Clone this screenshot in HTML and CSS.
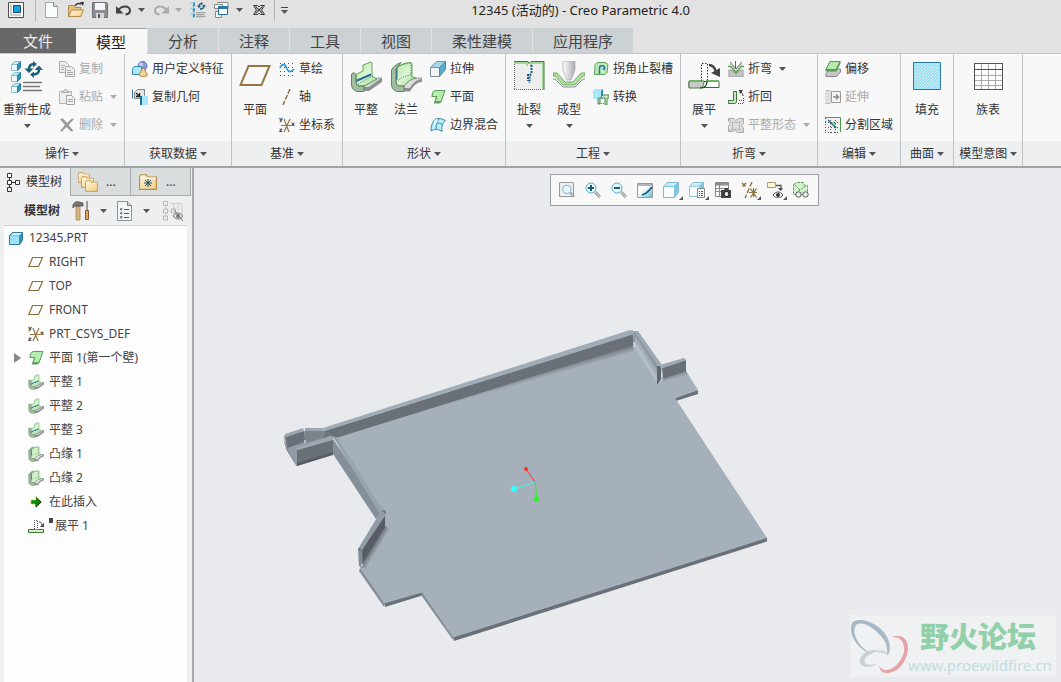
FILE: index.html
```html
<!DOCTYPE html>
<html lang="zh-CN">
<head>
<meta charset="utf-8">
<meta name="viewport" content="width=device-width, initial-scale=1">
<title>12345 (活动的) - Creo Parametric 4.0</title>
<link rel="stylesheet" href="styles.css">
</head>
<body>
<svg class="sprite" aria-hidden="true">
  <defs>
    <linearGradient id="g-green" x1="0" y1="0" x2="1" y2="1"><stop offset="0" stop-color="#b5e6a8"/><stop offset=".5" stop-color="#dcf5d4"/><stop offset="1" stop-color="#9bd592"/></linearGradient>
    <linearGradient id="g-folder" x1="0" y1="0" x2="1" y2="1"><stop offset="0" stop-color="#fff6dc"/><stop offset="1" stop-color="#f2cc83"/></linearGradient>
    <linearGradient id="g-grey" x1="0" y1="0" x2="1" y2="0"><stop offset="0" stop-color="#fff"/><stop offset="1" stop-color="#a9abb0"/></linearGradient>
    <linearGradient id="g-screen" x1="0" y1="0" x2="1" y2="1"><stop offset=".4" stop-color="#fff"/><stop offset="1" stop-color="#5fb4d6"/></linearGradient>
    <pattern id="p-hatch" width="3" height="3" patternUnits="userSpaceOnUse"><rect width="3" height="3" fill="#8edcf8"/><path d="M-1 1L1-1M0 3L3 0M2 4L4 2" stroke="#fff" stroke-width=".9"/></pattern>
  </defs>
  <symbol id="caret" viewBox="0 0 7 4"><path d="M0 0h7L3.500 4z" fill="currentColor"/></symbol>
  <symbol id="app" viewBox="0 0 16 16"><path d="M.5.5h15v15H.5z" fill="#fff" stroke="#4a4a4a"/><path d="M2 2h2v12H2zM4 12h9v2H4z" fill="#c9ced2"/><path d="M5.500 3.500h7v7h-7z" fill="#17a3dc" stroke="#1b4b6d"/></symbol>
  <symbol id="new" viewBox="0 0 16 16"><path d="M1.500.5h8l4 4v11h-12z" fill="#fbfcfc" stroke="#a3a8ab"/><path d="M9.500.5v4h4" fill="#dfe3e6" stroke="#8f9396"/></symbol>
  <symbol id="open" viewBox="0 0 16 16"><path d="M.5 14.500v-11h5l1.500 2h6v9z" fill="#e9c27d" stroke="#b08a4c"/><path d="M.5 14.500l3-6.500h12l-3 6.500z" fill="url(#g-folder)" stroke="#b08a4c"/><path d="M7 4c1-2 3-3 6-2" fill="none" stroke="#333" stroke-width="1.500"/><path d="M12 0l4 0-1 4z" fill="#333"/></symbol>
  <symbol id="save" viewBox="0 0 16 16"><path d="M.5.5h14l1 1v14H.5z" fill="#8b8e92" stroke="#6d7074"/><path d="M3 1h10v7H3z" fill="#f4f5f6"/><path d="M4 11h8v5H4z" fill="#d7d9db"/><path d="M6 12h2v4H6z" fill="#555"/></symbol>
  <symbol id="undo" viewBox="0 0 16 16"><path d="M2.500 8C6 3 13 3.500 14 8c.3 2.500-1.500 4-4.500 4.500" fill="none" stroke="#434343" stroke-width="2"/><path d="M0 4v7.500h7.500z" fill="#434343"/></symbol>
  <symbol id="redo" viewBox="0 0 16 16"><path d="M13.500 8C10 3 3 3.500 2 8c-.3 2.500 1.500 4 4.500 4.500" fill="none" stroke="#aaa" stroke-width="2"/><path d="M16 4v7.500H8.500z" fill="#aaa"/></symbol>
  <symbol id="minicube" viewBox="0 0 10 10"><path d="M.5 3.500h6v6h-6z" fill="#effbff" stroke="#8bbdd2"/><path d="M.5 3.500l3-3h6l-3 3z" fill="#bdeafa" stroke="#8bbdd2"/><path d="M6.500 3.500l3-3v6l-3 3z" fill="#2d93b8" stroke="#2582a5"/></symbol>
  <symbol id="regen" viewBox="0 0 32 32"><use href="#minicube" x="0" y="0" width="10" height="10"/><use href="#minicube" x="0" y="11" width="10" height="10"/><use href="#minicube" x="0" y="22" width="10" height="10"/><path d="M12 21.500h19M12 25.500h17M12 29.500h19" stroke="#777" stroke-width="1.500"/><path d="M23 3c-3 0-5 2-5 5.500M22 13.500c4 0 6-2 6-5" fill="none" stroke="#1b5e7b" stroke-width="2.500"/><path d="M13.500 7.500h9L18 12zM23.500 9h8.500L28 4.500zM22 0l4 3-4 3.500zM23 10.500v6.500l-4-3.500z" fill="#1b5e7b"/></symbol>
  <symbol id="windows" viewBox="0 0 16 16"><path d="M.5 2.500h8v4h-8zM3 .5h11v6h-4M1.500 9.500h6v6h-6z" fill="#f8f8f8" stroke="#858585"/><path d="M4.500 4.500h9v8h-9z" fill="#fff" stroke="#226e91"/><path d="M4 4h10v3H4z" fill="#247aa0"/></symbol>
  <symbol id="closewin" viewBox="0 0 16 16"><path d="M2.500 3.500h4L8 5l1.500-1.500h4L10.500 8l3 4.500h-4L8 11l-1.500 1.500h-4L5.500 8z" fill="#fff" stroke="#333"/><path d="M4.500 4.500l7 7M11.500 4.500l-7 7" stroke="#444" stroke-width="1.200"/></symbol>
  <symbol id="copy" viewBox="0 0 16 16"><g fill="#eee" stroke="#aaa"><path d="M.5.5h6l3 3v8h-9z"/><path d="M6.500 5.500h6l3 3v7h-9z"/></g><path d="M2 4.500h4M2 6.500h3M2 8.500h3M8 9.500h4M8 11.500h6M8 13.500h6" stroke="#aaa"/></symbol>
  <symbol id="paste" viewBox="0 0 16 16"><path d="M.5 2.500h12v12H.5z" fill="#eee" stroke="#b3b3b3"/><path d="M3 3.500C4 3 4 .5 6.500.5S9 3 10 3.500z" fill="#ddd" stroke="#aaa"/><path d="M7.500 6.500h5l3 3v6h-8z" fill="#f6f6f6" stroke="#a0a0a0"/><path d="M9 10.500h5M9 12.500h5" stroke="#a0a0a0"/></symbol>
  <symbol id="delete" viewBox="0 0 16 16"><path d="M1 2l3-.5L8 6l5-4.500 2 .5-5.500 6 5 6-2.500.5L7.500 10 3 14.500l-2-.5 5-6z" fill="#999"/></symbol>
  <symbol id="udf" viewBox="0 0 16 16"><circle cx="10.500" cy="5" r="4.500" fill="#8c9bd4" stroke="#6576b3"/><circle cx="9" cy="3.500" r="2" fill="#c6cff3"/><path d="M.5 7.500l2-2h7v7l-2 1h-7z" fill="#b1e7fa" stroke="#368ba8"/><path d="M11 6l4.500 8c-1 2-7 2-8.500 0z" fill="#f3d39a" stroke="#ad8448"/></symbol>
  <symbol id="copygeom" viewBox="0 0 16 16"><path d="M.5.5v9" stroke="#356fa2"/><path d="M2.500 3.500l3-3h7v6l-2 3h-8z" fill="#e4e4e4" stroke="#858585"/><path d="M4 4l3 3M7.500 4v3.500H4" stroke="#222" fill="none" stroke-width="1.400"/><path d="M8 7h8v9H8z" fill="#a9e6fc"/><path d="M8 7h2v9H8z" fill="#196d8f"/></symbol>
  <symbol id="plane" viewBox="0 0 32 32"><path d="M9.500 5h21L22.500 24H1.500z" fill="none" stroke="#957744" stroke-width="2"/></symbol>
  <symbol id="plane-s" viewBox="0 0 16 16"><path d="M4.500 3.500h10l-4 9H.8z" fill="none" stroke="#8b6f3f" stroke-width="1.200"/></symbol>
  <symbol id="sketch" viewBox="0 0 16 16"><path d="M1 2.500h15M1 6.500h15M1 10.500h15M1 14.500h15" stroke="#555" stroke-dasharray="1 3"/><path d="M1 7c2-5 5-4 6.500 0s4 5 7.500 1" fill="none" stroke="#2e9ed0" stroke-width="1.800"/></symbol>
  <symbol id="axis" viewBox="0 0 16 16"><path d="M11 0L4 16" stroke="#8b6f3f" stroke-width="1.500" stroke-dasharray="5 1.500"/></symbol>
  <symbol id="flat" viewBox="0 0 32 32"><path d="M14 25l14-8h4v4L19 30h-5z" fill="#8d8f92"/><path d="M14 25l14-8h4l-13 9.500h-5z" fill="#d2d3d5" stroke="#85888b" stroke-width=".8"/><path d="M6 13.500L13 10V4l8-3 1 1v13l5 3-13 7H9q-3-1-3-4z" fill="url(#g-green)" stroke="#5fa45f"/><path d="M8 23l15-8" stroke="#4a8f4e" stroke-dasharray="1 1"/><path d="M6 20l15-6.500" stroke="#1d6f95" stroke-width="2"/><path d="M1.500 13L4 11.500l2 2V21q0 4 3 4h5v5.500H7Q1.500 29 1.500 23z" fill="#a3bda0" stroke="#5c8260"/></symbol>
  <symbol id="flange" viewBox="0 0 32 32"><path d="M14 25q5-8 12-8h6v4q-7 0-12 9.500h-6z" fill="#8d8f92"/><path d="M14 25q5-8 12-8h6v1.500q-7 0-12 9h-6z" fill="#dcdddf" stroke="#85888b" stroke-width=".8"/><path d="M6 8Q10 2 21 1.500l1 1V16l4 1q-7 1-12 8H9q-3-1-3-4z" fill="url(#g-green)" stroke="#5fa45f"/><path d="M8 6Q13 2.500 21 2.500V14Q13 15 8 20" fill="none" stroke="#21693b" stroke-dasharray="1 1.500"/><path d="M6.500 7v12" stroke="#1679ac" stroke-width="2"/><path d="M1.500 9Q4 4 11 1.500L6 8v13q0 4 3 4h5v5.500H7Q1.500 29 1.500 23z" fill="#a3bda0" stroke="#5c8260"/></symbol>
  <symbol id="extrude" viewBox="0 0 16 16"><path d="M.5 6.500h9v9h-9z" fill="#f3f7f9" stroke="#7f8c93"/><path d="M.5 6.500l6-6h9l-6 6z" fill="#a4d6ec" stroke="#5b9fbc"/><path d="M9.500 6.500l6-6v8l-6 7z" fill="#5dabcb" stroke="#3f8eaf"/></symbol>
  <symbol id="wall" viewBox="0 0 16 16"><path d="M2.500 4.500L5 1.500h10L11 13.500l-2 1H3.500l2-4v-3h-4z" fill="#5c9e5f"/><path d="M2.500 3.500L5 1.500h10L11 12.500H5l2-5H2z" fill="#b6ecac" stroke="#5c9e5b"/></symbol>
  <symbol id="blend" viewBox="0 0 16 16"><path d="M1 14C1 8 3 4 5.500 2c3-1 6-.5 10 1.500-3 2-4 5-3.500 11-2-2-7-3-11-.5z" fill="#bcecfa" stroke="#378bab"/><path d="M3 7c4-2 7-1 10 1M9 2C6 5 6 9 6.500 13" fill="none" stroke="#378bab"/><path d="M5 3l3-1-2 5-3 1z" fill="#fff"/></symbol>
  <symbol id="rip" viewBox="0 0 32 32"><path d="M2 3h27v26H2z" fill="#eee"/><path d="M1.500 3v26M1 28.500h27" stroke="#666" stroke-dasharray="1 1"/><path d="M1 2h13v3M18 5V2h12v27" stroke="#a4d998" stroke-width="2" fill="none"/><path d="M1 .5h14l1 2 2-2h13V29" fill="none" stroke="#41733f"/><path d="M18.500 4v8l-2 3v7M15 13v7" fill="none" stroke="#155e84" stroke-width="2" stroke-dasharray="2 1"/></symbol>
  <symbol id="form" viewBox="0 0 32 32"><path d="M10 0h12v9l-4 10h-4L10 9z" fill="url(#g-grey)" stroke="#a4a6aa" stroke-width=".7"/><path d="M0 12h4l8 9h8l8-9h4v3h-2l-8 9H10L2 15H0z" fill="#b0df9d" stroke="#5f9a5a" stroke-width=".8"/><path d="M0 18h2l8 8h12l8-8h2" fill="none" stroke="#898b8c"/></symbol>
  <symbol id="relief" viewBox="0 0 16 16"><path d="M2 3.500l2-2h8l3 2-1 8-2 2H1.500z" fill="#bde6b5" stroke="#5fa35e"/><path d="M6.500 13V7c0-3 5-3 5 0v1h-3" fill="none" stroke="#217aa0" stroke-width="1.500"/><path d="M9 6v7" stroke="#e5ffff"/></symbol>
  <symbol id="convert" viewBox="0 0 16 16"><path d="M0 2l2-2h8v10H0z" fill="#aae7fb"/><path d="M8 2l2-2v8l-2 2z" fill="#2d8db3"/><path d="M7 9l3-3h6v3h-2v7h-2V9zM5 9h2v6H5z" fill="#cfe3cb" stroke="#4c8d4f"/><path d="M6 14.500h5" stroke="#4c8d4f" stroke-dasharray="1 1"/></symbol>
  <symbol id="unfold" viewBox="0 0 32 32"><path d="M13.500 20V2.500h6V20" fill="#fff" stroke="#333" stroke-dasharray="1.500 1.500"/><path d="M1 20.500h30v6H1z" fill="#fff" stroke="#376b35"/><path d="M1 20h15c0 5-2 7-5 7H1z" fill="#c9c9c9" stroke="#477d43"/><path d="M1 20h12M18 20h13" stroke="#6eb362" stroke-width="2"/><path d="M12 27c6 0 7-3 7-7" fill="none" stroke="#275e28" stroke-width="1.500"/><path d="M21 4c4 0 6 3 7 7" fill="none" stroke="#444" stroke-width="2.500"/><path d="M32 7v9l-9-4z" fill="#444"/></symbol>
  <symbol id="unfold-s" viewBox="0 0 16 16"><path d="M6.500 11V2.500h3V11" fill="#fff" stroke="#444" stroke-dasharray="1 1"/><path d="M.5 11.500h6c2 0 1 0 3 0h6v3H.5z" fill="#d3ecc9" stroke="#3c7a3a"/><path d="M11 4c2 0 3 1 3 3" fill="none" stroke="#444"/><path d="M16 5v4h-4z" fill="#444"/></symbol>
  <symbol id="bend" viewBox="0 0 16 16"><path d="M1 9h3l4 4 4-4h3v7H1z" fill="#c4c4c4" stroke="#999"/><path d="M0 5.500h3l5 6 5-6h3" fill="none" stroke="#5e9b58" stroke-width="1.500"/><path d="M2 1l6 7 6-7M7.500 0v8" fill="none" stroke="#666"/><path d="M2 3l6 7 6-7" fill="none" stroke="#9bd88c"/></symbol>
  <symbol id="bendback" viewBox="0 0 16 16"><path d="M.5 11.500h5v-9h3v10q0 2-2 2h-6z" fill="#c9e6c2" stroke="#3d7a3a"/><path d="M10 14.500h6M11 11.500h5M15.500 9v5" stroke="#555" stroke-dasharray="1 1"/><path d="M15 7c0-2-1-3-2-4" fill="none" stroke="#333"/><path d="M11 1h4l-3 4z" fill="#333"/></symbol>
  <symbol id="flatstate" viewBox="0 0 16 16"><path d="M.5 1.500h5l2 2 3-2h5v5l-2 2 2 2v5h-6l-2-2-3 1h-4v-6l2-2-2-2z" fill="#ddd" stroke="#aaa"/><path d="M4.500 5.500h7v7h-7zM1 2l4 4M11 6l4-4M11 12l4 4M5 12l-4 2" fill="none" stroke="#999" stroke-dasharray="1 1"/></symbol>
  <symbol id="offset" viewBox="0 0 16 16"><path d="M1 12.500L5 8h10.500v3l-4 4.500H1z" fill="#c7c7c7" stroke="#888"/><path d="M.5 8.500l4-8h11v2l-4 8H.5z" fill="#5c9e5f"/><path d="M1 8.500l4-8h10l-4 8z" fill="#b6ecac" stroke="#5b995b"/></symbol>
  <symbol id="extend" viewBox="0 0 16 16"><path d="M0 2h6v12H0z" fill="#ddd"/><path d="M.5 1.500h5M.5 14.500h5" stroke="#bbb"/><path d="M6.500 2.500h9v11h-9z" fill="#f4f4f4" stroke="#999"/><path d="M8 8h5M11 5.500L13.500 8 11 10.500" stroke="#888" stroke-width="1.500" fill="none"/></symbol>
  <symbol id="split" viewBox="0 0 16 16"><path d="M0 1h15v14H0z" fill="#f2f2f2"/><path d="M5 5h6v6z" fill="#9adf91"/><path d="M.5 1v15M0 15.500h15M0 10.500h15M0 5.500h15M5.500 0v16M10.500 0v16" stroke="#555" stroke-dasharray="1 2"/><path d="M0 .5h15.500V15" stroke="#4f984b" fill="none"/><path d="M3 3l8 8" stroke="#1c7190" stroke-width="1.200"/></symbol>
  <symbol id="fill" viewBox="0 0 32 32"><path d="M2.500 1.500h27v27h-27z" fill="#a6e6fc" stroke="#2a7899"/><path d="M5 4h22v22H5z" fill="url(#p-hatch)"/></symbol>
  <symbol id="family" viewBox="0 0 32 32"><path d="M2.500 2.500h28v26h-28z" fill="#fff" stroke="#555"/><path d="M3 14.500h27M3 19.500h27M3 24.500h27M9.500 3v25M16.500 3v25M23.500 3v25" stroke="#aaa"/><path d="M2 8.500h29M2 2.500h29" stroke="#555"/></symbol>
  <symbol id="treeicon" viewBox="0 0 16 20"><path d="M4.500 3v14M4 10.500h6" stroke="#333"/><path d="M2.500 1.500h4v4h-4zM2.500 8.500h4v4h-4zM2.500 15.500h4v4h-4zM10.500 8.500h4v4h-4z" fill="#fff" stroke="#333"/></symbol>
  <symbol id="onefolder" viewBox="0 0 16 14"><path d="M.5 13.500V2.500l1-2h5l1 2h8v11z" fill="url(#g-folder)" stroke="#b58b47"/><path d="M1 3.500h14" stroke="#fff8df"/></symbol>
  <symbol id="folders" viewBox="0 0 20 20"><use href="#onefolder" x="0" y="0" width="12" height="11"/><use href="#onefolder" x="3" y="4" width="13" height="12"/><use href="#onefolder" x="7" y="8" width="13" height="12"/></symbol>
  <symbol id="favorite" viewBox="0 0 20 20"><use href="#onefolder" x="1" y="2" width="18" height="16"/><path d="M10 7v8M6 11h8M7 8l6 6M13 8l-6 6" stroke="#164f68"/></symbol>
  <symbol id="tools" viewBox="0 0 20 20"><path d="M4 5h4v14H4z" fill="#d8b47d" stroke="#a5844f" stroke-width=".8"/><path d="M1 4c1-3 4-4 6-3l4 1v3H8.500V5H4C2 5 2 5 1 7z" fill="#777" stroke="#444" stroke-width=".8"/><path d="M14 0h2v9h-2z" fill="#999"/><path d="M13.500 9.500h3v9h-3z" fill="#dba460" stroke="#805e32"/></symbol>
  <symbol id="list" viewBox="0 0 20 20"><path d="M2.500.5h10l4 4v15h-14z" fill="#f1f6f8" stroke="#8a9398"/><path d="M12.500.5v4h4" fill="#ccd4d8" stroke="#7a8388"/><path d="M9 8.500h5M9 12.500h5M9 16.500h5" stroke="#555"/><path d="M5.500 7.500h1.500v1.500h-1.500zM5.500 11.500h1.500v1.500h-1.500zM5.500 15.500h1.500v1.500h-1.500z" fill="none" stroke="#555" stroke-width=".7"/></symbol>
  <symbol id="hide" viewBox="0 0 20 20"><path d="M3 3v14M3 10h7M7 2.500h12v12M11 3v5M15 3v8" stroke="#ccc" fill="none"/><path d="M.5.500h4v4h-4zM.5 8h4v4h-4zM.5 15h4v4h-4zM8.500 8h4v4h-4z" fill="#eee" stroke="#b8b8b8"/><path d="M10 15c3-4 7-4 10 0-3 4-7 4-10 0z" fill="#ddd" stroke="#777"/><circle cx="15" cy="15" r="2" fill="#777"/><path d="M11 9l9 11" stroke="#777"/></symbol>
  <symbol id="cube" viewBox="0 0 16 16"><path d="M1.500 5.500l3-3h10v8l-3 4h-10z" fill="#2f92ba" stroke="#2a789b"/><path d="M2 6h9v8H2z" fill="#9be3fa"/><path d="M2 5.500L5 3h9l-3 2.500z" fill="#d2f4ff"/></symbol>
  <symbol id="insert" viewBox="0 0 16 16"><path d="M3 6h5V2.500L13.500 8 8 13.500V10H3z" fill="#078c07" stroke="#b6d52c" stroke-width=".7"/><path d="M8 9v4l5-5-5-4" fill="none" stroke="#163f05"/></symbol>
  <symbol id="lens" viewBox="0 0 16 16"><path d="M10 10l5 5" stroke="#999" stroke-width="3"/><path d="M10 10l5 5" stroke="#ddd"/><circle cx="6" cy="6" r="5" fill="#e8f8ff" stroke="#5ba9c6"/></symbol>
  <symbol id="zoomfit" viewBox="0 0 16 16"><path d="M.5.5h14v14H.5z" fill="#eee" stroke="#999"/><use href="#lens" x="3" y="2" width="13" height="14"/></symbol>
  <symbol id="zoomin" viewBox="0 0 16 16"><use href="#lens" width="16" height="16"/><path d="M3 6h6M6 3v6" stroke="#185b75" stroke-width="2"/></symbol>
  <symbol id="zoomout" viewBox="0 0 16 16"><use href="#lens" width="16" height="16"/><path d="M3 6h6" stroke="#185b75" stroke-width="2"/></symbol>
  <symbol id="repaint" viewBox="0 0 16 16"><path d="M.5 1.500h15v14H.5z" fill="url(#g-screen)" stroke="#999"/><path d="M1 2h14v2H1z" fill="#a9b9c2"/><path d="M5 13C9 12 12 9 15 5" fill="none" stroke="#145f7e" stroke-width="1.800"/></symbol>
  <symbol id="shade" viewBox="0 0 16 16"><path d="M.5 4.500l4-4h11v10l-4 5H.5z" fill="#7cc6e2" stroke="#7fbdd5"/><path d="M1 5h10v10H1z" fill="#f8fdff"/><path d="M1 4l4-3h9l-3 3z" fill="#c6eefb"/></symbol>
  <symbol id="views" viewBox="0 0 16 16"><use href="#shade" width="15" height="15"/><path d="M8.500 6.500h7v9h-7z" fill="#fff" stroke="#888"/><path d="M10 9.500h1m1 0h2M10 11.500h1m1 0h2M10 13.500h1m1 0h2" stroke="#555"/></symbol>
  <symbol id="camera" viewBox="0 0 16 16"><path d="M.5.5h13v14H.5z" fill="#f8f8f8" stroke="#888"/><path d="M1 1h12v2H1zM1 6.500h12M1 9.500h12M4.500 1v14" stroke="#888" fill="#999"/><path d="M6 8h3l1-2h3l1 2h2v8H6z" fill="#444"/><circle cx="11.500" cy="12" r="2.500" fill="#eee" stroke="#111"/></symbol>
  <symbol id="datum" viewBox="0 0 16 16"><path d="M1 1l4 4M5 1L1 5M11 0L4 16" stroke="#8b6f3f" stroke-width="1.400" stroke-dasharray="5 2"/><path d="M12.500 6v9M8 10.500h8M9.500 6.500l6 9M15.500 6.500l-6 9" stroke="#8b6f3f" stroke-width="1.200"/></symbol>
  <symbol id="annot" viewBox="0 0 16 16"><path d="M.5.5h8v5h-8z" fill="#fff3d6" stroke="#b09a6f"/><path d="M9 3.500h5v4" fill="none" stroke="#555" stroke-width="1.300"/><path d="M11 6h5l-2.500 3z" fill="#444"/><path d="M6 13c3-4 7-4 10 0-3 4-7 4-10 0z" fill="#fff" stroke="#444"/><circle cx="11" cy="13" r="2" fill="#333"/></symbol>
  <symbol id="bendview" viewBox="0 0 16 16"><path d="M.5 2.500l3-2h7l1 3h3v9H.5z" fill="#d2f0cc" stroke="#58a855" stroke-dasharray="3 1"/><path d="M2 3l5 5 6-4M7 8l-5 5" fill="none" stroke="#347b34" stroke-dasharray="1 1"/><circle cx="5.500" cy="12.500" r="2.700" fill="#eee" stroke="#555"/><circle cx="12.500" cy="12.500" r="2.700" fill="#eee" stroke="#555"/></symbol>
</svg>

<header class="titlebar">
  <div class="quick">
    <button class="tool" aria-label="窗口"><svg class="icon"><use href="#app"/></svg></button>
    <span class="rule"></span>
    <button class="tool" aria-label="新建"><svg class="icon"><use href="#new"/></svg></button>
    <button class="tool" aria-label="打开"><svg class="icon"><use href="#open"/></svg></button>
    <button class="tool" aria-label="保存"><svg class="icon"><use href="#save"/></svg></button>
    <button class="tool" aria-label="撤消"><svg class="icon"><use href="#undo"/></svg></button>
    <button class="tool drop" aria-label="撤消列表"><svg class="caret"><use href="#caret"/></svg></button>
    <button class="tool" aria-label="重做"><svg class="icon"><use href="#redo"/></svg></button>
    <button class="tool drop muted" aria-label="重做列表"><svg class="caret"><use href="#caret"/></svg></button>
    <button class="tool" aria-label="重新生成"><svg class="icon"><use href="#regen"/></svg></button>
    <button class="tool" aria-label="窗口切换"><svg class="icon"><use href="#windows"/></svg></button>
    <button class="tool drop" aria-label="窗口列表"><svg class="caret"><use href="#caret"/></svg></button>
    <button class="tool" aria-label="关闭"><svg class="icon"><use href="#closewin"/></svg></button>
    <span class="rule rule--close"></span>
    <button class="tool more" aria-label="自定义"><svg class="caret"><use href="#caret"/></svg></button>
  </div>
  <h1 class="title">12345 (活动的) - Creo Parametric 4.0</h1>
</header>

<nav class="tabs">
  <button class="tab tab--file">文件</button>
  <button class="tab tab--active">模型</button>
  <button class="tab">分析</button>
  <button class="tab">注释</button>
  <button class="tab">工具</button>
  <button class="tab">视图</button>
  <button class="tab">柔性建模</button>
  <button class="tab">应用程序</button>
</nav>

<section class="ribbon">
  <div class="group">
    <div class="group-body group-body--wide">
      <button class="big"><svg class="icon-lg"><use href="#regen"/></svg><span>重新生成</span><svg class="caret"><use href="#caret"/></svg></button>
      <div class="stack">
        <button class="small" disabled><svg class="icon"><use href="#copy"/></svg><span>复制</span></button>
        <button class="small" disabled><svg class="icon"><use href="#paste"/></svg><span>粘贴</span><svg class="caret"><use href="#caret"/></svg></button>
        <button class="small" disabled><svg class="icon"><use href="#delete"/></svg><span>删除</span><svg class="caret"><use href="#caret"/></svg></button>
      </div>
    </div>
    <button class="group-name">操作<svg class="caret"><use href="#caret"/></svg></button>
  </div>
  <div class="group">
    <div class="group-body">
      <div class="stack">
        <button class="small"><svg class="icon"><use href="#udf"/></svg><span>用户定义特征</span></button>
        <button class="small"><svg class="icon"><use href="#copygeom"/></svg><span>复制几何</span></button>
      </div>
    </div>
    <button class="group-name">获取数据<svg class="caret"><use href="#caret"/></svg></button>
  </div>
  <div class="group">
    <div class="group-body">
      <button class="big"><svg class="icon-lg"><use href="#plane"/></svg><span>平面</span></button>
      <div class="stack">
        <button class="small"><svg class="icon"><use href="#sketch"/></svg><span>草绘</span></button>
        <button class="small"><svg class="icon"><use href="#axis"/></svg><span>轴</span></button>
        <button class="small"><svg class="icon" viewBox="0 0 16 16" aria-hidden="true"><path d="M2 8.500h10M5 2l5 13M11 2L5 15" stroke="#937646" stroke-width="1.200" fill="none"/><g class="axis-letter"><text x="0" y="4">y</text><text x="0" y="15">z</text><text x="12" y="9">x</text></g></svg><span>坐标系</span></button>
      </div>
    </div>
    <button class="group-name">基准<svg class="caret"><use href="#caret"/></svg></button>
  </div>
  <div class="group">
    <div class="group-body">
      <button class="big"><svg class="icon-lg"><use href="#flat"/></svg><span>平整</span></button>
      <button class="big"><svg class="icon-lg"><use href="#flange"/></svg><span>法兰</span></button>
      <div class="stack">
        <button class="small"><svg class="icon"><use href="#extrude"/></svg><span>拉伸</span></button>
        <button class="small"><svg class="icon"><use href="#wall"/></svg><span>平面</span></button>
        <button class="small"><svg class="icon"><use href="#blend"/></svg><span>边界混合</span></button>
      </div>
    </div>
    <button class="group-name">形状<svg class="caret"><use href="#caret"/></svg></button>
  </div>
  <div class="group">
    <div class="group-body">
      <button class="big"><svg class="icon-lg"><use href="#rip"/></svg><span>扯裂</span><svg class="caret"><use href="#caret"/></svg></button>
      <button class="big"><svg class="icon-lg"><use href="#form"/></svg><span>成型</span><svg class="caret"><use href="#caret"/></svg></button>
      <div class="stack">
        <button class="small"><svg class="icon"><use href="#relief"/></svg><span>拐角止裂槽</span></button>
        <button class="small"><svg class="icon"><use href="#convert"/></svg><span>转换</span></button>
      </div>
    </div>
    <button class="group-name">工程<svg class="caret"><use href="#caret"/></svg></button>
  </div>
  <div class="group">
    <div class="group-body">
      <button class="big"><svg class="icon-lg"><use href="#unfold"/></svg><span>展平</span><svg class="caret"><use href="#caret"/></svg></button>
      <div class="stack">
        <button class="small"><svg class="icon"><use href="#bend"/></svg><span>折弯</span><svg class="caret"><use href="#caret"/></svg></button>
        <button class="small"><svg class="icon"><use href="#bendback"/></svg><span>折回</span></button>
        <button class="small" disabled><svg class="icon"><use href="#flatstate"/></svg><span>平整形态</span><svg class="caret"><use href="#caret"/></svg></button>
      </div>
    </div>
    <button class="group-name">折弯<svg class="caret"><use href="#caret"/></svg></button>
  </div>
  <div class="group">
    <div class="group-body">
      <div class="stack">
        <button class="small"><svg class="icon"><use href="#offset"/></svg><span>偏移</span></button>
        <button class="small" disabled><svg class="icon"><use href="#extend"/></svg><span>延伸</span></button>
        <button class="small"><svg class="icon"><use href="#split"/></svg><span>分割区域</span></button>
      </div>
    </div>
    <button class="group-name">编辑<svg class="caret"><use href="#caret"/></svg></button>
  </div>
  <div class="group">
    <div class="group-body group-body--solo">
      <button class="big"><svg class="icon-lg"><use href="#fill"/></svg><span>填充</span></button>
    </div>
    <button class="group-name">曲面<svg class="caret"><use href="#caret"/></svg></button>
  </div>
  <div class="group">
    <div class="group-body group-body--solo">
      <button class="big"><svg class="icon-lg"><use href="#family"/></svg><span>族表</span></button>
    </div>
    <button class="group-name">模型意图<svg class="caret"><use href="#caret"/></svg></button>
  </div>
  <div class="ribbon-rest"></div>
</section>

<main class="work">
  <aside class="side">
    <div class="side-tabs">
      <button class="side-tab side-tab--active"><svg class="icon-tree"><use href="#treeicon"/></svg>模型树</button>
      <button class="side-tab" aria-label="文件夹浏览器"><svg class="icon-md"><use href="#folders"/></svg>...</button>
      <button class="side-tab" aria-label="收藏夹"><svg class="icon-md"><use href="#favorite"/></svg>...</button>
    </div>
    <div class="side-tools">
      <h2 class="side-title">模型树</h2>
      <button class="tool" aria-label="设置"><svg class="icon-md"><use href="#tools"/></svg></button>
      <button class="tool" aria-label="设置列表"><svg class="caret"><use href="#caret"/></svg></button>
      <button class="tool" aria-label="显示"><svg class="icon-md"><use href="#list"/></svg></button>
      <button class="tool" aria-label="显示列表"><svg class="caret"><use href="#caret"/></svg></button>
      <button class="tool push" aria-label="隐藏" disabled><svg class="icon-md"><use href="#hide"/></svg></button>
    </div>
    <ul class="tree">
      <li class="node node--root"><svg class="icon"><use href="#cube"/></svg><span>12345.PRT</span></li>
      <li class="node"><svg class="icon"><use href="#plane-s"/></svg><span>RIGHT</span></li>
      <li class="node"><svg class="icon"><use href="#plane-s"/></svg><span>TOP</span></li>
      <li class="node"><svg class="icon"><use href="#plane-s"/></svg><span>FRONT</span></li>
      <li class="node"><svg class="icon" viewBox="0 0 16 16" aria-hidden="true"><path d="M2 8.500h10M5 2l5 13M11 2L5 15" stroke="#937646" stroke-width="1.200" fill="none"/><g class="axis-letter"><text x="0" y="4">y</text><text x="0" y="15">z</text><text x="12" y="9">x</text></g></svg><span>PRT_CSYS_DEF</span></li>
      <li class="node node--parent"><button class="expander" aria-label="展开"></button><svg class="icon"><use href="#wall"/></svg><span>平面 1(第一个壁)</span></li>
      <li class="node"><svg class="icon"><use href="#flat"/></svg><span>平整 1</span></li>
      <li class="node"><svg class="icon"><use href="#flat"/></svg><span>平整 2</span></li>
      <li class="node"><svg class="icon"><use href="#flat"/></svg><span>平整 3</span></li>
      <li class="node"><svg class="icon"><use href="#flange"/></svg><span>凸缘 1</span></li>
      <li class="node"><svg class="icon"><use href="#flange"/></svg><span>凸缘 2</span></li>
      <li class="node"><svg class="icon"><use href="#insert"/></svg><span>在此插入</span></li>
      <li class="node node--new"><svg class="icon"><use href="#unfold-s"/></svg><span>展平 1</span></li>
    </ul>
  </aside>

  <section class="canvas">
    <svg class="part" viewBox="194 168 867 514" preserveAspectRatio="xMinYMin meet" role="img" aria-label="钣金零件">
      <defs>
        <linearGradient id="s-back" gradientUnits="userSpaceOnUse" x1="480" y1="388" x2="482" y2="395"><stop offset="0" stop-color="#6a7078"/><stop offset="1" stop-color="#a6b0ba"/></linearGradient>
        <linearGradient id="s-diag" gradientUnits="userSpaceOnUse" x1="373" y1="546" x2="378" y2="549"><stop offset="0" stop-color="#6a7078"/><stop offset="1" stop-color="#a6b0ba"/></linearGradient>
        <linearGradient id="s-tab" gradientUnits="userSpaceOnUse" x1="673" y1="372" x2="675" y2="379"><stop offset="0" stop-color="#6a7078"/><stop offset="1" stop-color="#a6b0ba"/></linearGradient>
        <linearGradient id="s-right" gradientUnits="userSpaceOnUse" x1="642" y1="362" x2="650" y2="357"><stop offset="0" stop-color="#a6b0ba"/><stop offset=".35" stop-color="#b7c1cc"/><stop offset="1" stop-color="#929ca6"/></linearGradient>
      </defs>
      <path d="M384 603L422 592 424 595 385 607zM453 637L767 537V541.500L454 641zM675 398L698 390V394L676 401z" fill="#6a7078"/>
      <path d="M334 437L633 344 658 384 663 379 686 371 698 390 675 398 767 538 453 637.500 422 592.500 384 603.500 360 569 385 526 382 511z" fill="#a6b0ba"/>
      <path d="M360 568L384 603V607L359 571zM422 592L453 637V640L421 595z" fill="#858f99"/>
      <path d="M334 437L633 343 634 351 345 440z" fill="url(#s-back)"/>
      <path d="M324 431L633 334 634 345 336 438z" fill="#6a7078"/>
      <path d="M323 428L630 330 634 331 634 334 324 431z" fill="#a1abb6"/>
      <path d="M634 334L657 366V384L634 348z" fill="url(#s-right)"/>
      <path d="M633 331H638L662 365 657 366 634 334z" fill="#9ea8b3"/>
      <path d="M634 333L657 366M634 333V343" stroke="#7c848c" fill="none"/>
      <path d="M634 342V347" stroke="#f5f5f5"/>
      <path d="M657 366H661V380L657 385z" fill="#626870"/>
      <path d="M661 378L686 368V371L689 376 664 382z" fill="url(#s-tab)"/>
      <path d="M662 368L686 360V371L663 379z" fill="#6a7078"/>
      <path d="M660 365L684 358 686 360 662 368z" fill="#9da7b1"/>
      <path d="M661 366L663 380" stroke="#aab4bf"/>
      <path d="M285 436L305 431 334 438 297 450V465L287 450z" fill="#929ba5"/>
      <path d="M286 437L304 431 305 442 287 448z" fill="#6a7078"/>
      <path d="M285 434L303 428 304 431 286 437zM305 428H323V431H305z" fill="#9da7b2"/>
      <path d="M305 431H323L324 438 305 443z" fill="#7c848b"/>
      <path d="M323 430L334 437 324 439z" fill="#6d747c"/>
      <path d="M305 440V443" stroke="#fff"/>
      <path d="M285 435V443L287 450 297 466" fill="none" stroke="#737d87"/>
      <path d="M297 449L333 439V454L297 466z" fill="#6a7078"/>
      <path d="M297 463L333 452V455L297 466z" fill="#585d64"/>
      <path d="M295 448L330 436 334 437 333 440 298 450z" fill="#9ea8b3"/>
      <path d="M296 449V464" stroke="#929ca6"/>
      <path d="M333 439L382 511 376 519 333 454z" fill="#858f99"/>
      <path d="M333 437H337L384 512 380 514z" fill="#99a3ae"/>
      <path d="M362 565L385 526 390 529 366 569z" fill="url(#s-diag)"/>
      <path d="M362 550L385 513V527L362 565z" fill="#585d65"/>
      <path d="M358 549L381 511 385 512 385 516 362 550z" fill="#929ca6"/>
      <path d="M358 549H362L363 567 359 566z" fill="#828c96"/>
      <path d="M382 511H385V514M358 549H361" fill="none" stroke="#59616a"/>
      <path d="M360 567L366 568" stroke="#87919b"/>
      <path d="M362 564V566" stroke="#fff"/>
      <path d="M535 482L526 469" stroke="#ff3030"/><circle cx="526" cy="469" r="2" fill="#ff3030"/>
      <path d="M535 482L514 489" stroke="#30ffff"/><circle cx="514" cy="489" r="3" fill="#30ffff"/>
      <path d="M535.500 482L536.500 499" stroke="#30f030"/><circle cx="536.500" cy="499" r="2.600" fill="#30f030"/>
    </svg>

    <div class="view-tools">
      <button class="tool" aria-label="重新调整"><svg class="icon"><use href="#zoomfit"/></svg></button>
      <button class="tool" aria-label="放大"><svg class="icon"><use href="#zoomin"/></svg></button>
      <button class="tool" aria-label="缩小"><svg class="icon"><use href="#zoomout"/></svg></button>
      <button class="tool" aria-label="重画"><svg class="icon"><use href="#repaint"/></svg></button>
      <button class="tool tool--menu" aria-label="显示样式"><svg class="icon"><use href="#shade"/></svg></button>
      <button class="tool tool--menu" aria-label="已保存方向"><svg class="icon"><use href="#views"/></svg></button>
      <button class="tool" aria-label="视图管理器"><svg class="icon"><use href="#camera"/></svg></button>
      <button class="tool tool--menu" aria-label="基准显示"><svg class="icon"><use href="#datum"/></svg></button>
      <button class="tool tool--menu" aria-label="注释显示"><svg class="icon"><use href="#annot"/></svg></button>
      <button class="tool" aria-label="折弯显示"><svg class="icon"><use href="#bendview"/></svg></button>
    </div>

    <div class="watermark">
      <svg class="rings" viewBox="0 0 58 60" aria-hidden="true">
        <path fill="#a9b8c6" d="M3 5C12-1 32 8 38 22c3 8 2 14-1 17 1-8-1-15-7-21C21 8 11 4 6 8 1 16 8 29 20 36 8 33-4 15 3 5z"/>
        <path fill="#e6a3a8" d="M42 20c8-4 17 1 16 13-2 14-12 24-22 23-4 0-6-3-7-7 4 5 9 5 15 1 7-5 11-14 10-20-1-7-5-10-12-10z"/>
        <path fill="#c9d0d7" d="M30 34c-9-3-19 2-20 9-1 8 9 9 17 4-9 2-14 0-12-5 2-4 8-7 15-8zM26 36c5-4 10-3 12 2-3-2-7-3-12-2z"/>
      </svg>
      <div class="mark-text">
        <strong class="mark-name">野火论坛</strong>
        <a class="mark-link" href="#">www.proewildfire.cn</a>
      </div>
    </div>
  </section>
</main>
</body>
</html>
```

FILE: styles.css
```css
* { box-sizing: border-box; }

body {
  margin: 0;
  min-height: 100vh;
  display: flex;
  flex-direction: column;
  font: 12px/16px "Noto Sans", "Noto Sans CJK SC", sans-serif;
  color: #333;
  background: #e2e2e2;
}

button {
  margin: 0;
  padding: 0;
  border: 0;
  background: none;
  font: inherit;
  color: inherit;
}

svg { display: block; flex: none; }
.sprite { position: absolute; width: 0; height: 0; }
.icon { width: 16px; height: 16px; }
.icon-md { width: 20px; height: 20px; }
.icon-lg { width: 32px; height: 32px; }
.icon-tree { width: 16px; height: 20px; }
.caret { width: 7px; height: 4px; color: #555; }
.axis-letter { font: bold 6px "DejaVu Sans", sans-serif; fill: #333; }

/* Title bar */
.titlebar {
  display: flex;
  align-items: center;
  height: 28px;
  padding: 0 188px 8px 8px;
}
.quick { display: flex; align-items: center; gap: 8px; }
.tool { display: flex; align-items: center; justify-content: center; }
.drop { margin-left: -2px; }
.muted .caret { color: #aaa; }
.rule { width: 1px; height: 22px; margin-left: 3px; background: #b4b4b4; }
.rule--close { margin-left: -1px; }
.more { margin-left: -2px; border-top: 1px solid #444; padding-top: 2px; }
.title {
  flex: 1;
  margin: 0;
  text-align: center;
  font-size: 13px;
  font-weight: 400;
  line-height: 20px;
  color: #222;
}

/* Ribbon tabs */
.tabs { display: flex; gap: 1px; height: 26px; border-bottom: 1px solid #c4c7c9; }
.tab {
  height: 25px;
  padding: 0 20px;
  font-size: 15px;
  line-height: 24px;
  background: #ccd1d4;
  color: #444;
}
.tab--file { padding: 0 23px; margin-right: -1px; background: #686868; color: #eee; }
.tab--active {
  height: 26px;
  padding: 0 21px 0 20px;
  border-top: 1px solid #a0a0a0;
  line-height: 22px;
  background: #f8f8f8;
  color: #222;
}

/* Ribbon */
.ribbon { display: flex; border-bottom: 2px solid #a2a5a6; background: #f8f8f8; }
.group { display: flex; flex-direction: column; border-right: 1px solid #bfc2c4; }
.group-body { display: flex; flex: 1; gap: 8px; padding: 1px 7px 2px; }
.group-body--wide { padding-left: 3px; }
.group-body--solo { justify-content: center; padding-left: 10px; padding-right: 10px; }
.group-name {
  display: flex;
  align-items: center;
  justify-content: center;
  gap: 3px;
  height: 25px;
  padding: 0 5px;
  background: #eeeff1;
}
.ribbon-rest {
  flex: 1;
  background: linear-gradient(to top, #eeeff1 25px, #f8f8f8 25px);
}
.big {
  display: flex;
  flex-direction: column;
  align-items: center;
  min-width: 32px;
  height: 84px;
  padding-top: 6px;
  white-space: nowrap;
}
.big span { margin-top: 9px; }
.big .caret { margin-top: 6px; }
.stack { display: flex; flex-direction: column; }
.small {
  display: flex;
  align-items: center;
  gap: 4px;
  height: 28px;
  white-space: nowrap;
}
.small .caret { margin: 0 0 0 3px; }
.small:disabled { color: #aaa; }
.small:disabled .caret { color: #aaa; }

/* Model tree panel */
.work { flex: 1; display: flex; }
.side {
  display: flex;
  flex-direction: column;
  width: 194px;
  padding-right: 1px;
  border-right: 2px solid #a8abac;
  background: #eeeff1;
}
.side-tabs { display: flex; height: 28px; }
.side-tab {
  flex: 1;
  display: flex;
  align-items: center;
  gap: 8px;
  padding-left: 7px;
  border: solid #a8adac;
  border-width: 0 0 1px 1px;
  background: #dadddd;
}
.side-tab:last-child { border-right-width: 1px; }
.side-tab--active {
  flex: none;
  gap: 5px;
  padding: 0 8px 0 5px;
  border: 0;
  background: none;
}
.side-tools {
  display: flex;
  align-items: center;
  gap: 8px;
  height: 29px;
  padding: 0 8px 0 24px;
  white-space: nowrap;
}
.side-title { margin: 0 4px 0 0; font-size: 12px; line-height: 16px; font-weight: 700; }
.push { margin-left: auto; }
.tree {
  flex: 1;
  margin: 0 4px;
  padding: 0;
  border-top: 1px solid #d0d3d5;
  list-style: none;
  background: #fdfdfd;
  color: #444;
}
.node {
  display: flex;
  align-items: center;
  gap: 5px;
  height: 24px;
  padding-left: 24px;
  white-space: nowrap;
}
.node--root { padding-left: 4px; }
.node--parent { padding-left: 10px; }
.expander {
  width: 9px;
  height: 10px;
  background: #888;
  clip-path: polygon(0 0, 80% 50%, 0 100%);
}
.node--new span { display: flex; gap: 2px; }
.node--new span::before { content: ""; width: 4px; height: 5px; background: #444; }

/* Graphics area */
.canvas {
  position: relative;
  flex: 1;
  background: #e8eaee;
  overflow: hidden;
}
.part { position: absolute; top: 0; left: 0; width: 100%; }
.view-tools {
  position: absolute;
  top: 6px;
  left: 356px;
  display: flex;
  gap: 10px;
  padding: 7px 9px 7px 8px;
  border: 1px solid #9c9fa1;
  background: #f8f8f8;
}
.tool--menu { position: relative; }
.tool--menu::after {
  content: "";
  position: absolute;
  right: -4px;
  bottom: -2px;
  width: 4px;
  height: 4px;
  background: #555;
  clip-path: polygon(100% 0, 100% 100%, 0 100%);
}
.watermark {
  position: absolute;
  right: 5px;
  bottom: 5px;
  display: flex;
  width: 206px;
  height: 62px;
  background: #eff1f3;
}
.rings { width: 58px; height: 60px; margin-top: 2px; }
.mark-text { display: flex; flex-direction: column; }
.mark-name {
  padding-left: 12px;
  font: 900 29px/40px "Noto Sans CJK SC", sans-serif;
  color: #92d0aa;
}
.mark-link {
  font-size: 15px;
  line-height: 20px;
  color: #c2dedf;
  text-decoration: none;
}
```
